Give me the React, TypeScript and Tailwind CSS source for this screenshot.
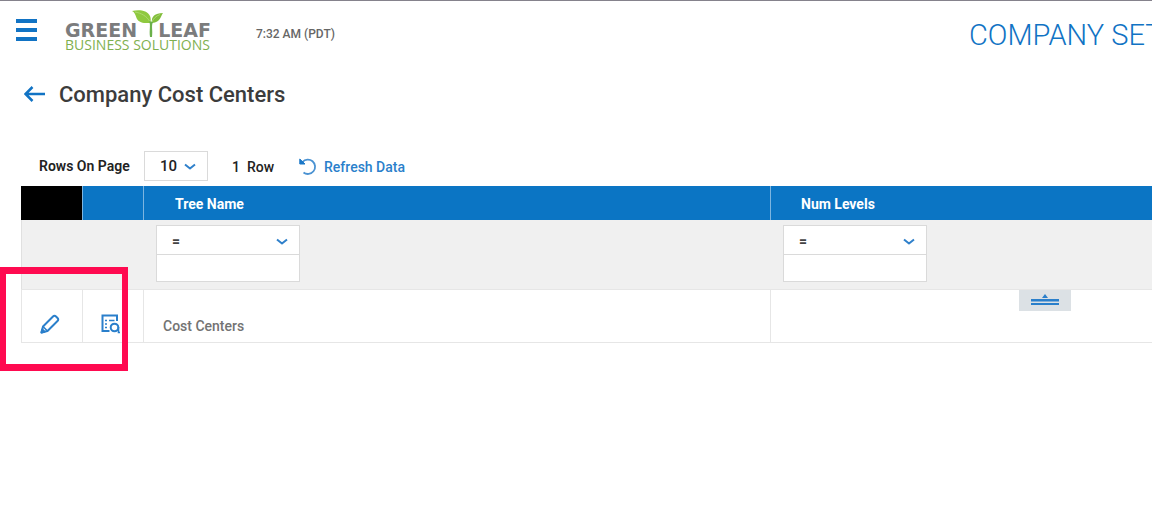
import React from "react";

function Chevron({ className }: { className: string }) {
  return (
    <svg viewBox="0 0 12 8" className={className} fill="none" stroke="#2f80cb" strokeWidth="2" aria-hidden="true">
      <path d="M1 1.500L6 5.500L11 1.500" strokeLinejoin="round" />
    </svg>
  );
}

function Logo() {
  return (
    <a href="#home" aria-label="Green Leaf Business Solutions" className="relative ml-7 block w-[146px] pt-[11px]">
      <span className="flex justify-between font-['DejaVu_Sans'] text-[19px] leading-[18px] font-bold text-[#7b7c7d]">
        <span>GREEN</span>
        <span>LEAF</span>
      </span>
      <span className="block font-['Open_Sans'] text-[14px] leading-3 whitespace-nowrap text-[#7fb04f]">
        BUSINESS SOLUTIONS
      </span>
      <svg viewBox="0 0 32 30" className="absolute top-0 left-[67px] h-[30px] w-8" aria-hidden="true">
        <path d="M18 13 C15 13 7 14 4.500 8 C3.500 5 2.500 2 0 1 C7 -0.500 15 0 18 6 C19 8.500 19 11 18 13Z" fill="#8fc93f" />
        <path d="M20 13 C19 6 23 3.500 31 3 C28.500 6 29 12 20 13Z" fill="#82be3c" />
        <path d="M3 2 C9 3 15 6 18 12" fill="none" stroke="#b4dc78" strokeWidth="0.800" />
        <path d="M28 4.500 C24 6 21 9 20 12" fill="none" stroke="#b4dc78" strokeWidth="0.800" />
        <path d="M17 11 C19 15 17 20 18 27 H20 C21 20 19 16 21 12Z" fill="#6bb04a" />
      </svg>
    </a>
  );
}

function ColumnFilter({ column }: { column: string }) {
  return (
    <div className="w-36 border border-[#dadada] bg-white">
      <div className="relative border-b border-[#dadada]">
        <select
          aria-label={`${column} operator`}
          defaultValue="="
          className="block h-7 w-full appearance-none bg-transparent pt-0.5 pl-[15px] text-sm font-bold text-[#444]"
        >
          <option>=</option>
        </select>
        <Chevron className="pointer-events-none absolute top-3 right-[11px] h-2 w-3" />
      </div>
      <input aria-label={`${column} value`} type="text" className="block h-[26px] w-full px-2 text-sm outline-none" />
    </div>
  );
}

export default function App() {
  return (
    <div className="relative min-h-screen overflow-hidden border-t border-[#85828c] bg-white font-['Roboto',sans-serif] text-[#222]">
      <header className="flex h-[70px] items-start">
        <button type="button" aria-label="Menu" className="mt-[18px] ml-4 flex w-[21px] flex-col gap-[5px]">
          <span className="h-1 bg-[#1173c4]" />
          <span className="h-1 bg-[#1173c4]" />
          <span className="h-1 bg-[#1173c4]" />
        </button>
        <div className="pt-[9px]">
          <Logo />
        </div>
        <span className="mt-[25px] ml-[45px] text-[12px] leading-4 font-medium text-[#666]">7:32 AM (PDT)</span>
        <div className="mt-4 ml-auto w-[183px] overflow-hidden text-[29px] leading-9 font-light whitespace-nowrap text-[#1173c4]">
          COMPANY SET
        </div>
      </header>

      <main>
        <div className="flex h-12 items-center pl-6">
          <a href="#back" aria-label="Back">
            <svg viewBox="0 0 22 18" className="h-[18px] w-[22px]" fill="none" stroke="#1173c4" strokeWidth="2.500" aria-hidden="true">
              <path d="M21 8H1.500M8.500 1L1.500 8L8.500 15" />
            </svg>
          </a>
          <h1 className="ml-[13px] text-[22px] leading-8 font-medium text-[#3c3c3c]">Company Cost Centers</h1>
        </div>

        <div className="mt-8 flex h-[30px] items-center pl-[39px] text-[14px] leading-5 font-medium">
          <label htmlFor="rows" className="w-[105px] font-semibold whitespace-nowrap">
            Rows On Page
          </label>
          <div className="relative">
            <select
              id="rows"
              defaultValue="10"
              className="block h-[30px] w-16 appearance-none border border-[#dadada] bg-white pl-[15px] text-[15px]"
            >
              <option>10</option>
              <option>25</option>
            </select>
            <Chevron className="pointer-events-none absolute top-3 right-3 h-2 w-3" />
          </div>
          <span className="ml-6 pt-0.5 whitespace-pre">1  Row</span>
          <button type="button" className="ml-[25px] flex items-center gap-[7px] pt-0.5 whitespace-nowrap text-[#2a80cb]">
            <svg viewBox="0 0 18 18" className="h-[18px] w-[18px]" fill="none" stroke="#4a92d2" strokeWidth="1.800" aria-hidden="true">
              <path d="M3.500 4A7.200 7.200 0 1 1 4.500 14.500" />
              <path d="M0.800 1V6H6Z" fill="#1b78c8" stroke="#1b78c8" strokeWidth="1" />
            </svg>
            Refresh Data
          </button>
        </div>

        <div className="mt-[5px] pl-[21px]">
          <table className="w-full table-fixed border-separate border-spacing-0 text-left">
            <colgroup>
              <col className="w-[61px]" />
              <col className="w-[61px]" />
              <col className="w-[627px]" />
              <col />
            </colgroup>
            <thead>
              <tr className="h-[34px] bg-[#0b75c4] text-[14px] text-white">
                <th className="bg-black p-0" aria-label="Edit" />
                <th className="border-l border-[#7db5e0] p-0" aria-label="View" />
                <th className="border-l border-[#7db5e0] pt-0.5 pr-0 pb-0 pl-[31px] font-bold">Tree Name</th>
                <th className="border-l border-[#7db5e0] pt-0.5 pr-0 pb-0 pl-[30px] font-bold">Num Levels</th>
              </tr>
            </thead>
            <tbody>
              <tr className="h-[69px] bg-[#f0f0f0]">
                <td className="border-l border-[#e0e0e0] p-0" />
                <td className="p-0" />
                <td className="pt-0 pr-0 pb-0.5 pl-[13px]">
                  <ColumnFilter column="Tree Name" />
                </td>
                <td className="pt-0 pr-0 pb-0.5 pl-[13px]">
                  <ColumnFilter column="Num Levels" />
                </td>
              </tr>
              <tr className="h-[54px] text-[14px] font-medium text-[#737373]">
                <td className="border border-r-0 border-[#e6e6e6] p-0">
                  <button type="button" aria-label="Edit" className="mt-4 ml-[18px] block">
                    <svg viewBox="0 0 20 20" className="h-5 w-5" fill="none" stroke="#2a7fcb" strokeWidth="2" strokeLinejoin="round" aria-hidden="true">
                      <path d="M1.500 18.500L3 12.500L13 2.500Q14.500 1 16 2.500L17.500 4Q19 5.500 17.500 7L7.500 17Z" />
                      <path d="M3 12.500L7.500 17" strokeWidth="1.500" />
                      <path d="M1.500 18.500L2.200 15.500L4.500 17.800Z" fill="#2a7fcb" />
                    </svg>
                  </button>
                </td>
                <td className="border border-r-0 border-[#e6e6e6] p-0">
                  <button type="button" aria-label="View" className="mt-4 ml-[18px] block">
                    <svg viewBox="0 0 20 20" className="h-5 w-5" fill="none" stroke="#2a7fcb" strokeWidth="2" aria-hidden="true">
                      <path d="M8.500 17H1.500V1.500H16V7" />
                      <path d="M4 6.500H6M4 10H6M4 13.500H6M8 6.500H13.500" strokeWidth="1.600" />
                      <circle cx="13.500" cy="13.500" r="3.800" />
                      <path d="M17.500 13V18.500H19" strokeWidth="1.600" />
                    </svg>
                  </button>
                </td>
                <td className="border border-r-0 border-[#e6e6e6] pt-5 pr-0 pb-0 pl-[19px]">Cost Centers</td>
                <td className="relative border border-r-0 border-[#e6e6e6] p-0">
                  <button
                    type="button"
                    aria-label="Collapse panel"
                    className="absolute top-0 right-[81px] flex h-[21px] w-[52px] justify-center bg-[#dce1e5]"
                  >
                    <svg viewBox="0 0 28 21" className="h-[21px] w-7" fill="#2a7fcb" aria-hidden="true">
                      <path d="M14 4L17 8H11Z" />
                      <path d="M0 9H28V11.500H0ZM0 13H28V15H0Z" />
                    </svg>
                  </button>
                </td>
              </tr>
            </tbody>
          </table>
        </div>
      </main>

      <div
        aria-hidden="true"
        className="pointer-events-none absolute top-[266px] left-0 h-[104px] w-32 border-x-[6px] border-y-[7px] border-[#ff0a50]"
      />
    </div>
  );
}
